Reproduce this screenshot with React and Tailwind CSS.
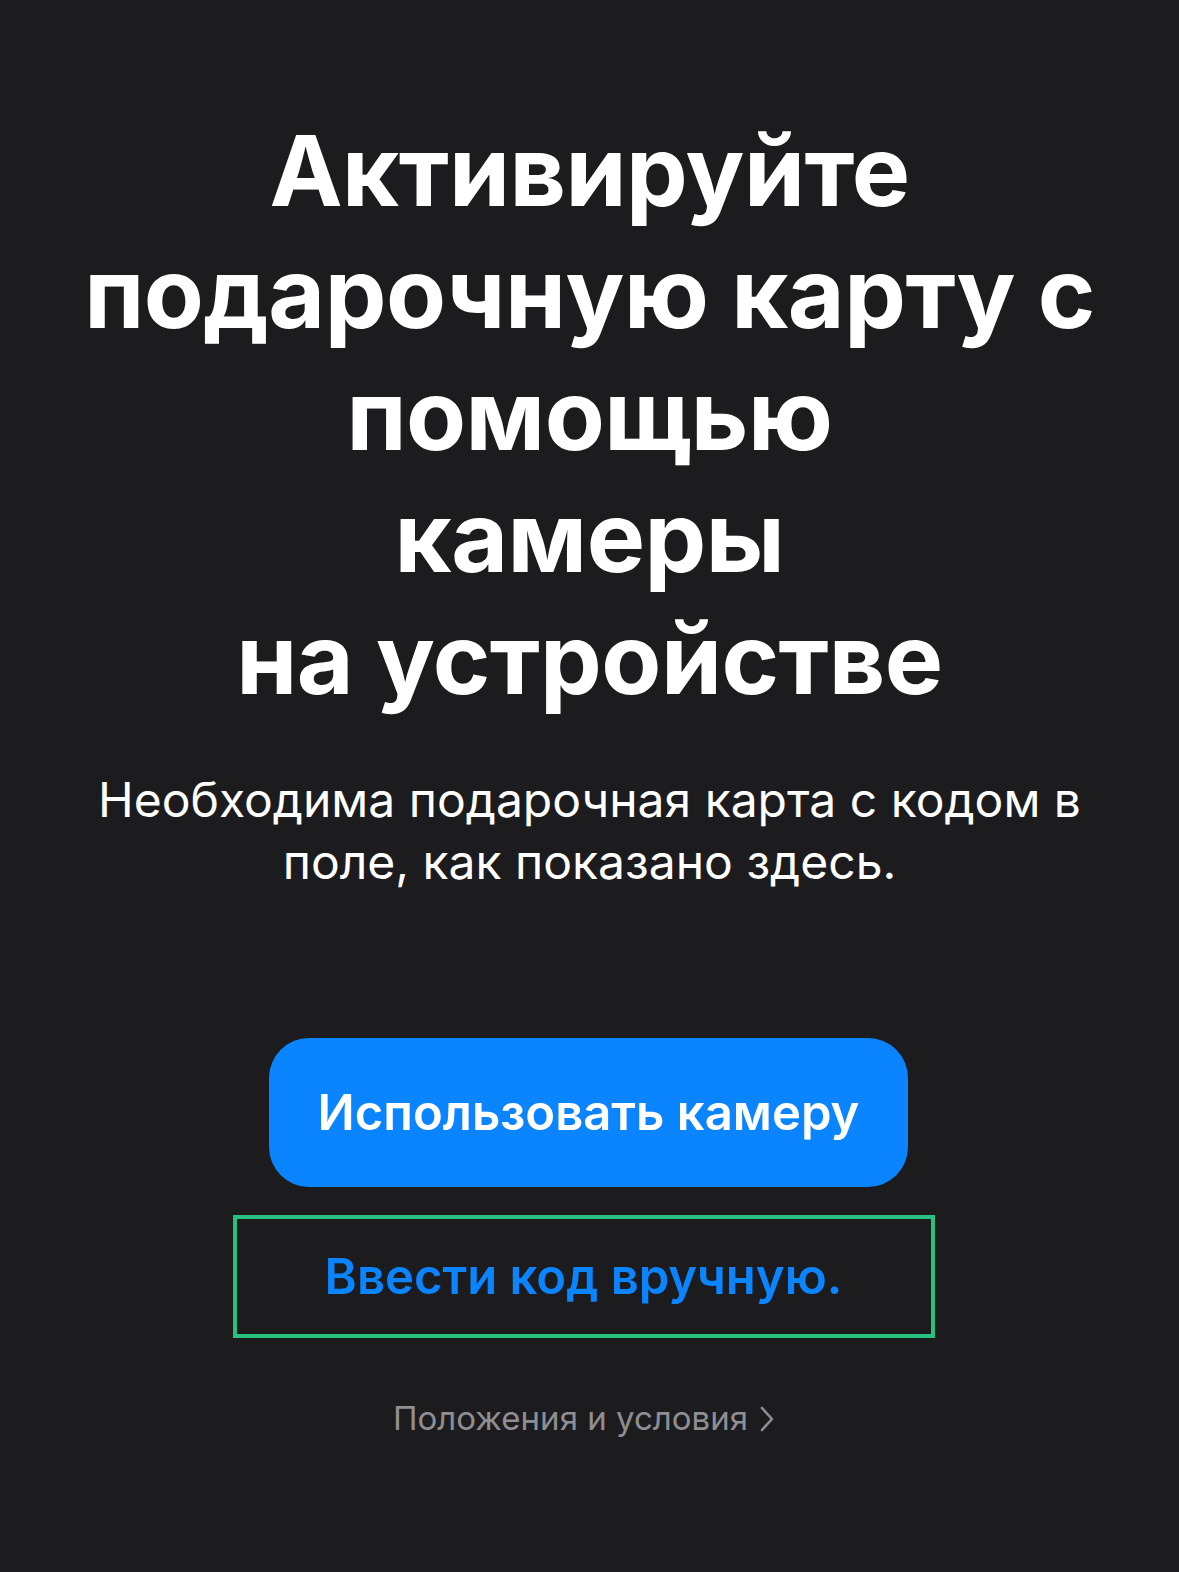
export default function App() {
  return (
    <div className="min-h-[1572px] w-full bg-[#1c1c1e] flex flex-col items-center" style={{ fontFamily: 'Inter, "Noto Sans", sans-serif' }}>
      <h1 className="mt-[110px] text-center text-white font-bold text-[98px] leading-[122px] tracking-[-0.5px]">
        Активируйте<br />подарочную карту с<br />помощью<br />камеры<br />на устройстве
      </h1>
      <p className="mt-[49px] text-center text-white text-[48px] leading-[62px] font-normal">
        Необходима подарочная карта с кодом в<br />поле, как показано здесь.
      </p>
      <button className="mt-[145px] ml-[-2px] w-[639px] h-[149px] rounded-[40px] bg-[#0a84ff] text-white text-[49px] font-semibold">
        Использовать камеру
      </button>
      <div className="mt-[28px] mr-[12px] w-[702px] h-[123px] border-[4px] border-[#28c07e] flex items-center justify-center">
        <span className="text-[#0a84ff] text-[49px] font-semibold">Ввести код вручную.</span>
      </div>
      <div className="mt-[56px] mr-[12px] flex items-center gap-[12px] text-[#8e8e93] text-[33px]">
        <span>Положения и условия</span>
        <svg width="14" height="26" viewBox="0 0 14 26" fill="none" stroke="#8e8e93" strokeWidth="2.6" strokeLinecap="round" strokeLinejoin="round">
          <path d="M2 2l10 11L2 24" />
        </svg>
      </div>
    </div>
  );
}
